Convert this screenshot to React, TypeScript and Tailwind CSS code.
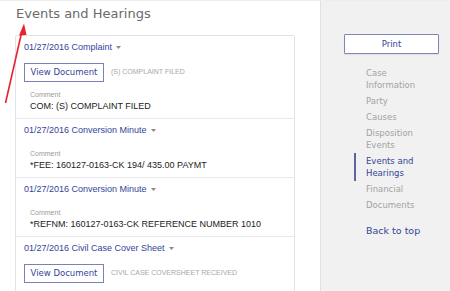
import React from "react";

type Row = { title: string; doc?: string; comment?: string };

const rows: Row[] = [
  { title: "01/27/2016 Complaint", doc: "(S) COMPLAINT FILED", comment: "COM: (S) COMPLAINT FILED" },
  { title: "01/27/2016 Conversion Minute", comment: "*FEE: 160127-0163-CK 194/ 435.00 PAYMT" },
  { title: "01/27/2016 Conversion Minute", comment: "*REFNM: 160127-0163-CK REFERENCE NUMBER 1010" },
  { title: "01/27/2016 Civil Case Cover Sheet", doc: "CIVIL CASE COVERSHEET RECEIVED" },
];

const nav: { label: string[]; active?: boolean }[] = [
  { label: ["Case", "Information"] },
  { label: ["Party"] },
  { label: ["Causes"] },
  { label: ["Disposition", "Events"] },
  { label: ["Events and", "Hearings"], active: true },
  { label: ["Financial"] },
  { label: ["Documents"] },
];

function Caret() {
  return (
    <svg width="5" height="3" viewBox="0 0 5 3" className="ml-[4px] mt-[1px]">
      <path d="M0 0 H5 L2.5 3 Z" fill="#8a8a8a" />
    </svg>
  );
}

export default function App() {
  return (
    <div className="relative flex h-[291px] w-[450px] overflow-hidden border-t border-[#ececf2] bg-white">
      <main className="w-[320px] shrink-0 pl-[15px] pt-[5px]">
        <h1 className="pl-[1px] font-['DejaVu_Sans',sans-serif] text-[13px] leading-[16px] text-[#6a6a6a]">
          Events and Hearings
        </h1>
        <div className="mt-[13px] w-[280px] rounded-[2px] border border-[#e2e2e8] bg-white font-['Liberation_Sans',Arial,sans-serif]">
          {rows.map((r, i) => (
            <div
              key={i}
              className={`border-b border-[#e8e8ee] px-[8px] pt-[5px] ${i === rows.length - 1 ? "pb-[30px]" : "pb-[6px]"}`}
            >
              <div className="flex items-center text-[9px] leading-[12px] text-[#34449a]">
                <span>{r.title}</span>
                <Caret />
              </div>
              {r.doc && (
                <div className="mt-[10px] flex items-center">
                  <div className="flex h-[19px] w-[80px] items-center justify-center border border-[#7b81b4] bg-white font-['DejaVu_Sans',sans-serif] text-[8.5px] text-[#34449a]">
                    View Document
                  </div>
                  <span className="ml-[7px] text-[7px] text-[#a8a8a8]">{r.doc}</span>
                </div>
              )}
              {r.comment && (
                <div className={`${r.doc ? "mt-[8px]" : "mt-[13px]"} pl-[6px]`}>
                  <div className="text-[7px] leading-[9px] text-[#9a9a9a]">Comment</div>
                  <div className="mt-[1px] text-[9px] leading-[12px] text-[#222]">{r.comment}</div>
                </div>
              )}
            </div>
          ))}
        </div>
      </main>
      <aside className="h-full w-[130px] shrink-0 border-l border-[#e0e0e0] bg-[#f1f1f1] pt-[33px] font-['DejaVu_Sans',sans-serif]">
        <div className="ml-[23px] flex h-[20px] w-[95px] items-center justify-center rounded-[1px] border border-[#7f86b6] bg-white text-[8.5px] text-[#34449a] shadow-[0_1px_1px_rgba(0,0,0,0.08)]">
          Print
        </div>
        <ul className="ml-[33px] mt-[11px]">
          {nav.map((n, i) => (
            <li
              key={i}
              className={`border-l-2 py-[2px] pl-[10px] text-[8.5px] leading-[12px] ${
                n.active ? "border-[#5d66a3] text-[#34449a]" : "border-transparent text-[#a3a3a3]"
              }`}
            >
              {n.label.map((l, j) => (
                <div key={j}>{l}</div>
              ))}
            </li>
          ))}
        </ul>
        <div className="ml-[45px] mt-[12px] text-[9.5px] leading-[12px] text-[#34449a]">Back to top</div>
      </aside>
      <svg className="pointer-events-none absolute left-0 top-0" width="450" height="291" viewBox="0 0 450 291">
        <line x1="5.5" y1="102" x2="21.5" y2="32" stroke="#e8232b" strokeWidth="1.6" />
        <path d="M24 22.5 L19 34.5 L26.5 34 Z" fill="#e8232b" />
      </svg>
    </div>
  );
}
